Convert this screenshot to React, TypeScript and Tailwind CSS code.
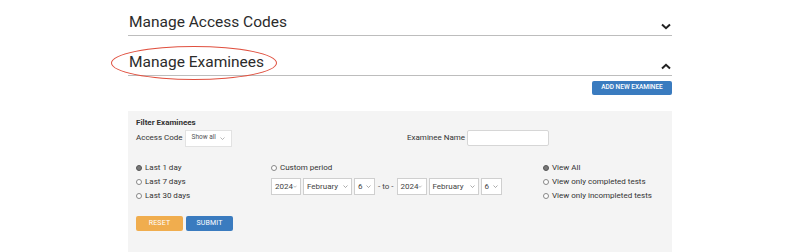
import React from "react"

const font = { fontFamily: "Roboto, 'Noto Sans', sans-serif" }

function Chevron({ up }: { up?: boolean }) {
  return (
    <svg width="10" height="7" viewBox="0 0 10 7" className="mr-[1px]">
      <path
        d={up ? "M1 5.5 L5 1.8 L9 5.5" : "M1 1.5 L5 5.2 L9 1.5"}
        fill="none"
        stroke="#222"
        strokeWidth="2"
      />
    </svg>
  )
}

function FakeSelect({ label, w }: { label: string; w: string }) {
  return (
    <div className={`${w} h-[17px] bg-white border border-[#cfcfcf] flex items-center justify-between pl-[3px] pr-[3px] text-[8px] text-[#444]`}>
      <span>{label}</span>
      <svg width="5" height="3" viewBox="0 0 5 3">
        <path d="M0.5 0.5 L2.5 2.5 L4.5 0.5" fill="none" stroke="#888" strokeWidth="0.7" />
      </svg>
    </div>
  )
}

function Radio({ label, checked }: { label: string; checked?: boolean }) {
  return (
    <div className="flex items-center gap-[3px] h-[14px] text-[8px] text-[#333]">
      <span
        className={`w-[6px] h-[6px] rounded-full border ${checked ? "bg-[#777] border-[#555]" : "bg-white border-[#888]"}`}
      />
      <span>{label}</span>
    </div>
  )
}

export default function App() {
  return (
    <div className="w-[800px] h-[252px] bg-white overflow-hidden" style={font}>
      <div className="w-[544px] mx-auto">
        {/* Accordion headers */}
        <div className="h-[36px] border-b border-[#bdbdbd] flex items-end justify-between pb-[5px]">
          <span className="text-[15.5px] text-[#2b2b2b] leading-none pl-[1px]">Manage Access Codes</span>
          <Chevron />
        </div>
        <div className="relative h-[40px] border-b border-[#bdbdbd] flex items-end justify-between pb-[5px]">
          <span className="text-[15.5px] text-[#2b2b2b] leading-none pl-[1px]">Manage Examinees</span>
          <Chevron up />
          <div className="absolute left-[-17px] top-[10px] w-[166px] h-[34px] rounded-[50%] border border-[#e0503f]" />
        </div>

        <div className="flex justify-end pt-[5px]">
          <button className="w-[80px] h-[14px] bg-[#3a7bbf] rounded-[2px] text-white text-[6.5px] font-medium">
            ADD NEW EXAMINEE
          </button>
        </div>

        {/* Filter panel */}
        <div className="mt-[16px] bg-[#f4f4f4] h-[160px] px-[8px] pt-[7px] text-[#333]">
          <div className="text-[8px] font-bold leading-[10px]">Filter Examinees</div>
          <div className="flex items-center h-[18px] mt-[1px]">
            <div className="flex items-center w-[264px]">
              <span className="text-[8px] mr-[2px]">Access Code</span>
              <div className="w-[47px] h-[17px] bg-white border border-[#e2e2e2] flex items-center justify-between px-[6px] text-[6.5px] text-[#555]">
                <span>Show all</span>
                <svg width="5" height="3" viewBox="0 0 5 3">
                  <path d="M0.5 0.5 L2.5 2.5 L4.5 0.5" fill="none" stroke="#999" strokeWidth="0.7" />
                </svg>
              </div>
            </div>
            <div className="flex items-center ml-[7px]">
              <span className="text-[8px] mr-[2px]">Examinee Name</span>
              <div className="w-[82px] h-[16px] bg-white border border-[#d6d6d6] rounded-[2px]" />
            </div>
          </div>

          <div className="grid grid-cols-[135px_272px_1fr] mt-[14px]">
            <div className="flex flex-col">
              <Radio label="Last 1 day" checked />
              <Radio label="Last 7 days" />
              <Radio label="Last 30 days" />
            </div>
            <div className="flex flex-col">
              <Radio label="Custom period" />
              <div className="flex items-center gap-[2px] mt-[3px]">
                <FakeSelect label="2024" w="w-[30px]" />
                <FakeSelect label="February" w="w-[49px]" />
                <FakeSelect label="6" w="w-[21px]" />
                <span className="text-[8px] text-[#444] px-[1px]">- to -</span>
                <FakeSelect label="2024" w="w-[30px]" />
                <FakeSelect label="February" w="w-[50px]" />
                <FakeSelect label="6" w="w-[21px]" />
              </div>
            </div>
            <div className="flex flex-col">
              <Radio label="View All" checked />
              <Radio label="View only completed tests" />
              <Radio label="View only incompleted tests" />
            </div>
          </div>

          <div className="flex gap-[3px] mt-[13px]">
            <button className="w-[47px] h-[15px] bg-[#f0ad4e] rounded-[2px] text-white text-[7px] tracking-wide">RESET</button>
            <button className="w-[47px] h-[15px] bg-[#3a7bbf] rounded-[2px] text-white text-[7px] tracking-wide">SUBMIT</button>
          </div>
        </div>
      </div>
    </div>
  )
}
